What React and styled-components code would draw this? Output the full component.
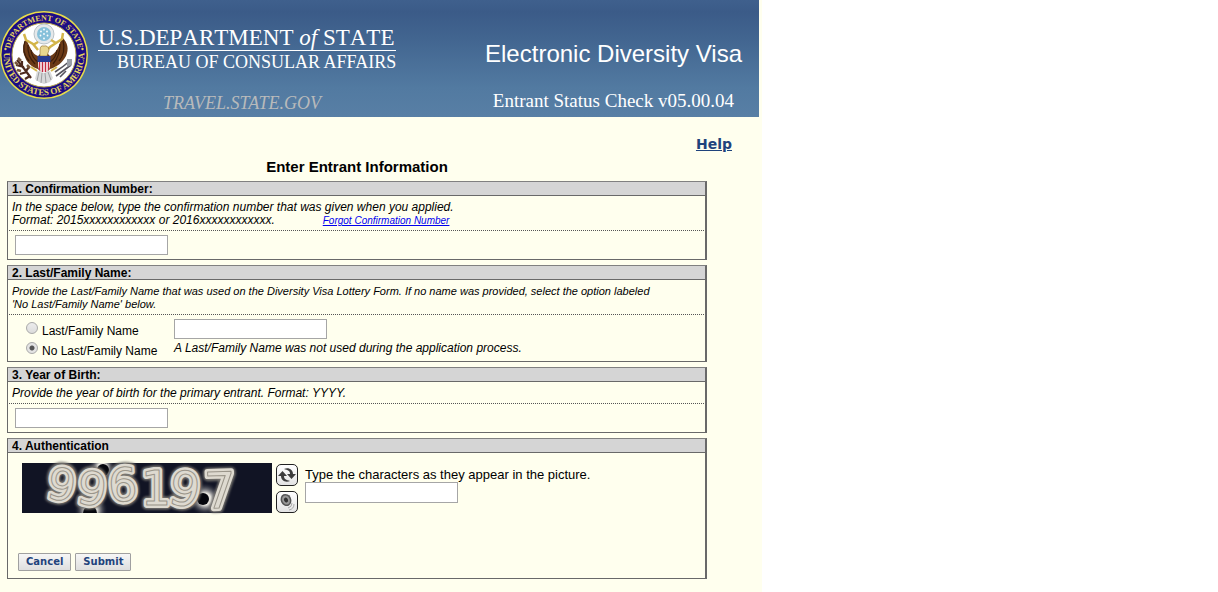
import React, { useState } from "react";
import styled, { createGlobalStyle } from "styled-components";

const GlobalStyle = createGlobalStyle`
  * { box-sizing: border-box; }
  body {
    margin: 0;
    background: #ffffff;
    color: #000000;
    font-family: "Liberation Sans", Arial, sans-serif;
  }
`;

const Page = styled.div`
  max-width: 762px;
  min-height: 100vh;
  padding-bottom: 13px;
  background: #ffffee;
`;

const Banner = styled.header`
  display: flex;
  align-items: flex-start;
  height: 117px;
  margin-right: 3px;
  padding-right: 17px;
  background: linear-gradient(#3f608d 0, #3b5b88 12px, #41648f 36px, #527aa1 88px, #587fa5 117px);
  color: #ffffff;
`;

const SealArt = styled.svg`
  flex: none;
  width: 89px;
  height: 90px;
  margin-top: 10px;
`;

const Agency = styled.div`
  display: flex;
  flex-direction: column;
  flex: none;
  margin: 26px 0 0 9px;
  font-family: "Liberation Serif", "Times New Roman", serif;
  white-space: nowrap;
`;

const Department = styled.div`
  border-bottom: 1px solid #ffffff;
  font-size: 23px;
  font-kerning: none;
  line-height: 24px;
`;

const Bureau = styled.div`
  margin-left: 19px;
  font-size: 18px;
  line-height: 22px;
`;

const SiteName = styled.div`
  margin: 20px 0 0 65px;
  color: #b8babb;
  font-size: 18px;
  font-style: italic;
  line-height: 20px;
`;

const Program = styled.div`
  flex: 1;
  padding-top: 40px;
  text-align: right;
  white-space: nowrap;
`;

const ProgramName = styled.div`
  font-size: 24px;
  line-height: 28px;
`;

const Version = styled.div`
  margin-top: 22px;
  padding-right: 8px;
  font-family: "Liberation Serif", "Times New Roman", serif;
  font-size: 19px;
  line-height: 22px;
`;

const HelpRow = styled.nav`
  padding: 18px 30px 0 0;
  font-family: "DejaVu Sans", Verdana, sans-serif;
  font-size: 14px;
  font-weight: bold;
  line-height: 18px;
  text-align: right;
`;

const HelpLink = styled.a`
  color: #1f437c;
`;

const EntrantForm = styled.form`
  display: flex;
  flex-direction: column;
  gap: 5px;
  padding: 0 55px 0 7px;
`;

const Heading = styled.h1`
  margin: 5px 0 0;
  font-size: 15px;
  line-height: 18px;
  text-align: center;
`;

const Panel = styled.section`
  border: 1px solid #696969;
  border-top-color: #808080;
  border-right-width: 2px;
`;

const PanelTitle = styled.h2`
  margin: 0;
  padding: 1px 0 0 4px;
  border-bottom: 1px solid #696969;
  background: #d5d5d5;
  font-size: 12px;
  line-height: 12px;
`;

const Instructions = styled.div`
  margin: 0 1px;
  padding: 5px 3px 3px;
  border-bottom: 1px dotted #555555;
  font-size: ${(p) => (p.$compact ? 11 : 12)}px;
  font-style: italic;
  line-height: 13px;
`;

const ForgotLink = styled.a`
  margin-left: 48px;
  color: #0000ee;
  font-size: 10px;
  line-height: 12px;
`;

const PanelBody = styled.div`
  padding: 4px 7px;
`;

const TextBox = styled.input`
  display: block;
  width: 153px;
  height: ${(p) => (p.$tall ? 21 : 20)}px;
  padding: 1px 3px;
  border: 1px solid #a6a6a6;
  border-radius: 0;
  background: #ffffff;
  font: 13px "Liberation Sans", Arial, sans-serif;
`;

const NameGrid = styled.div`
  display: grid;
  grid-template-columns: 148px 1fr;
  grid-template-rows: 20px 18px;
  align-items: start;
  padding: 4px 0 4px 18px;
  font-size: 12px;
`;

const Choice = styled.label`
  display: flex;
  align-items: flex-start;
  gap: 4px;
  padding-top: 3px;
`;

const ChoiceText = styled.span`
  padding-top: 3px;
  line-height: 12px;
  white-space: nowrap;
`;

const Radio = styled.input`
  appearance: none;
  flex: none;
  width: 12px;
  height: 12px;
  margin: 0;
  border: 1px solid #a9a9a9;
  border-radius: 50%;
  background: linear-gradient(#ececec, #dcdcdc);

  &:checked {
    background: radial-gradient(circle, #555555 0 2px, #e4e4e4 3px);
  }
`;

const NoteText = styled.div`
  font-style: italic;
  line-height: 18px;
`;

const AuthBody = styled.div`
  padding: 10px 10px 7px;
`;

const AuthRow = styled.div`
  display: flex;
  align-items: flex-start;
  padding-left: 4px;
`;

const CaptchaArt = styled.svg`
  flex: none;
  width: 250px;
  height: 50px;
  overflow: visible;
`;

const IconColumn = styled.div`
  display: flex;
  flex-direction: column;
  gap: 5px;
  margin: 1px 7px 0 4px;
`;

const IconButton = styled.button`
  display: block;
  width: 22px;
  height: 22px;
  padding: 0;
  border: 1px solid #222222;
  border-radius: 5px;
  background: linear-gradient(#ffffff, #e3e3e3);

  svg { display: block; width: 20px; height: 20px; }
`;

const AuthField = styled.label`
  padding-top: 4px;
  font-size: 13px;
  line-height: 15px;
`;

const Actions = styled.div`
  display: flex;
  gap: 4px;
  margin-top: 40px;
`;

const ActionButton = styled.button`
  height: 18px;
  padding: 0 7px;
  border: 1px solid #a0a0a0;
  border-radius: 1px;
  background: linear-gradient(#f6f6f6, #dedede);
  color: #1f437c;
  font: bold 10px/16px "DejaVu Sans", Verdana, sans-serif;
`;

const Seal = () => (
  <SealArt viewBox="0 0 89 90" role="img" aria-label="Department of State seal">
    <defs>
      <path id="arc-top" d="M9.500 45A34.500 34.500 0 0 1 78.500 45" />
      <path id="arc-bottom" d="M4 40A40.300 40.300 0 1 0 84 40" />
    </defs>
    <circle cx="44" cy="45" r="44" fill="#e8dc4a" />
    <circle cx="44" cy="45" r="42.500" fill="#1c0d85" />
    <circle cx="44" cy="45" r="32" fill="#ffffff" stroke="#b7a64c" strokeWidth="1" />
    <g fill="#e4d45e" fontFamily="Liberation Serif, serif" fontWeight="bold" textAnchor="middle">
      <text fontSize="8"><textPath href="#arc-top" startOffset="50%">DEPARTMENT OF STATE</textPath></text>
      <text fontSize="9"><textPath href="#arc-bottom" startOffset="50%">UNITED STATES OF AMERICA</textPath></text>
    </g>
    <circle cx="5.500" cy="39" r="1.200" fill="#e4d45e" />
    <circle cx="82.500" cy="39" r="1.200" fill="#e4d45e" />
    <circle cx="44" cy="24" r="10" fill="#e5e8ea" stroke="#a9b5bb" strokeWidth=".8" />
    <circle cx="44" cy="24" r="7" fill="#86c0da" />
    <g fill="#ffffff">
      <circle cx="44" cy="19.500" r=".9" /><circle cx="41" cy="21.500" r=".9" /><circle cx="47" cy="21.500" r=".9" />
      <circle cx="44" cy="24" r=".9" /><circle cx="40.500" cy="25.500" r=".9" /><circle cx="47.500" cy="25.500" r=".9" /><circle cx="44" cy="28.500" r=".9" />
    </g>
    <path d="M38 46 C32 44 30 37 26 29 C23 34 22 41 25 47 C27 53 32 57 38 59 L44 65 L50 59 C57 57 62 53 66 46 C69 39 68 33 62 27 C59 36 57 43 50 46 L44 40Z" fill="#6b3a17" />
    <path d="M25 31 Q21 42 29 51 M28 35 Q27 46 35 54 M31 40 Q32 48 38 52 M63 30 Q66 43 59 51 M60 34 Q60 46 53 54 M57 40 Q56 48 50 52" fill="none" stroke="#3b1d0b" strokeWidth="1.200" />
    <path d="M24 24 L26 30 L33 34 L38 40 M33 35 L38 32 M63 23 L62 29 L56 33 L50 37 L47 40 M56 33 L51 30" fill="none" stroke="#d3b54a" strokeWidth="2.500" />
    <path d="M40 40 Q40 35 44 36 Q48 35 49 40 L47 46 H40Z" fill="#ead78f" stroke="#8b6b32" strokeWidth=".6" />
    <path d="M37 61 L35 69 L39 72 L44 74 L50 72 L53 68 L50 61Z" fill="#d9dadb" />
    <path d="M39 62 L37 71 M42 63 L41 73 M45 63 L46 73 M48 62 L51 70" stroke="#8c8e91" strokeWidth=".8" />
    <path d="M38 47 H50 V56 Q50 60 44 63 Q38 60 38 56Z" fill="#ffffff" />
    <path d="M39.500 51V60 M42.500 51V62 M45.500 51V62 M48.500 51V60" stroke="#c32b40" strokeWidth="1.500" />
    <path d="M37.500 46 H50.500 V52 H37.500Z" fill="#283c93" />
    <path d="M17 50 Q24 58 31 68 M16 55 L24 57 M20 64 L27 62 M22 51 L22 57 M29 57 L26 61 M25 69 L30 66" fill="none" stroke="#4d291d" strokeWidth="2.200" />
    <path d="M18 48 l3 3 M15 52 l3 3 M17 60 l4 1 M27 55 l3 3" stroke="#79573c" strokeWidth="2.500" />
    <path d="M55 62 Q63 57 71 50 M56 66 L71 55 M60 67 L66 61" fill="none" stroke="#55535c" strokeWidth="1.600" />
    <path d="M67 49 L72 49 L72 55 L67 57Z" fill="#9ba0a8" />
    <path d="M31 57 L37 61 M57 57 L51 61" stroke="#d3b54a" strokeWidth="2" />
  </SealArt>
);

const DIGITS = [
  ["9", 39, 37, 44, 10],
  ["9", 70, 42, 46, 8],
  ["6", 101, 38, 46, -3],
  ["1", 134, 42, 48, 0],
  ["9", 163, 43, 48, 10],
  ["7", 198, 45, 50, -2],
];

const digitLayer = (props) =>
  DIGITS.map(([ch, cx, base, size, turn], i) => (
    <text
      key={i}
      x={cx}
      y={base}
      fontSize={size}
      textAnchor="middle"
      transform={`rotate(${turn} ${cx} 25)`}
      {...props}
    >
      {ch}
    </text>
  ));

const Captcha = () => (
  <CaptchaArt viewBox="0 0 250 50" role="img" aria-label="Verification characters">
    <defs>
      <filter id="soft" x="-20%" y="-20%" width="140%" height="140%">
        <feGaussianBlur stdDeviation="1" />
      </filter>
      <clipPath id="frame"><rect width="250" height="50" /></clipPath>
      <radialGradient id="glow">
        <stop offset="35%" stopColor="#e8e6df" />
        <stop offset="100%" stopColor="#111424" stopOpacity="0" />
      </radialGradient>
    </defs>
    <rect width="250" height="50" fill="#111424" />
    <g clipPath="url(#frame)">
      <circle cx="69" cy="47" r="17" fill="url(#glow)" />
      <circle cx="80" cy="5" r="14" fill="url(#glow)" />
      <circle cx="183" cy="36" r="17" fill="url(#glow)" />
      <circle cx="68" cy="50" r="7" fill="#05060c" />
      <circle cx="81" cy="7" r="6" fill="#05060c" />
      <circle cx="181" cy="36" r="6" fill="#05060c" />
    </g>
    <g fontFamily="DejaVu Sans, sans-serif" strokeLinejoin="round">
      {digitLayer({ fill: "#77756f", stroke: "#77756f", strokeWidth: 9, filter: "url(#soft)" })}
      {digitLayer({ fill: "none", stroke: "#dedad0", strokeWidth: 6 })}
      {digitLayer({ fill: "#dedad0", stroke: "#9a958a", strokeWidth: 1 })}
    </g>
  </CaptchaArt>
);

const RefreshIcon = () => (
  <svg viewBox="0 0 20 20" aria-hidden="true">
    <path d="M7 4 C12 2 16 5 16 9 H19 L14.500 14 L10 9 H13 C13 6 11 5 7 4Z" fill="#3d3d3d" />
    <path d="M13 16 C8 18 4 15 4 11 H1 L5.500 6 L10 11 H7 C7 14 9 15 13 16Z" fill="#3d3d3d" />
  </svg>
);

const SpeakerIcon = () => (
  <svg viewBox="0 0 20 20" aria-hidden="true">
    <path d="M4 5 Q7 2 13 3 L14 11 L9 14 Q4 12 4 5Z" fill="#aaaaaa" />
    <ellipse cx="9" cy="8" rx="4.500" ry="5.500" transform="rotate(-25 9 8)" fill="#999999" stroke="#555555" strokeWidth="1.500" />
    <ellipse cx="9" cy="8" rx="2" ry="2.500" transform="rotate(-25 9 8)" fill="#333333" />
    <path d="M11 16 Q15 15 15 11 M12 18 Q17 17 17 12" fill="none" stroke="#aaaaaa" strokeWidth="1" />
  </svg>
);

export default function App() {
  const [nameMode, setNameMode] = useState("none");

  return (
    <Page>
      <GlobalStyle />
      <Banner>
        <Seal />
        <Agency>
          <Department>U.S.DEPARTMENT <i>of</i> STATE</Department>
          <Bureau>BUREAU OF CONSULAR AFFAIRS</Bureau>
          <SiteName>TRAVEL.STATE.GOV</SiteName>
        </Agency>
        <Program>
          <ProgramName>Electronic Diversity Visa</ProgramName>
          <Version>Entrant Status Check v05.00.04</Version>
        </Program>
      </Banner>
      <HelpRow>
        <HelpLink href="#help">Help</HelpLink>
      </HelpRow>
      <EntrantForm onSubmit={(e) => e.preventDefault()}>
        <Heading>Enter Entrant Information</Heading>

        <Panel>
          <PanelTitle id="confirmation-title">1. Confirmation Number:</PanelTitle>
          <Instructions>
            In the space below, type the confirmation number that was given when you applied.
            <br />
            Format: 2015xxxxxxxxxxxx or 2016xxxxxxxxxxxx.
            <ForgotLink href="#forgot">Forgot Confirmation Number</ForgotLink>
          </Instructions>
          <PanelBody>
            <TextBox type="text" aria-labelledby="confirmation-title" />
          </PanelBody>
        </Panel>

        <Panel>
          <PanelTitle id="name-title">2. Last/Family Name:</PanelTitle>
          <Instructions $compact>
            Provide the Last/Family Name that was used on the Diversity Visa Lottery Form. If no name was provided, select the option labeled
            <br />
            'No Last/Family Name' below.
          </Instructions>
          <NameGrid>
            <Choice>
              <Radio type="radio" name="nameMode" checked={nameMode === "given"} onChange={() => setNameMode("given")} />
              <ChoiceText>Last/Family Name</ChoiceText>
            </Choice>
            <TextBox type="text" aria-labelledby="name-title" />
            <Choice>
              <Radio type="radio" name="nameMode" checked={nameMode === "none"} onChange={() => setNameMode("none")} />
              <ChoiceText>No Last/Family Name</ChoiceText>
            </Choice>
            <NoteText>A Last/Family Name was not used during the application process.</NoteText>
          </NameGrid>
        </Panel>

        <Panel>
          <PanelTitle id="birth-title">3. Year of Birth:</PanelTitle>
          <Instructions>Provide the year of birth for the primary entrant. Format: YYYY.</Instructions>
          <PanelBody>
            <TextBox type="text" aria-labelledby="birth-title" />
          </PanelBody>
        </Panel>

        <Panel>
          <PanelTitle>4. Authentication</PanelTitle>
          <AuthBody>
            <AuthRow>
              <Captcha />
              <IconColumn>
                <IconButton type="button" aria-label="New picture"><RefreshIcon /></IconButton>
                <IconButton type="button" aria-label="Play audio"><SpeakerIcon /></IconButton>
              </IconColumn>
              <AuthField>
                Type the characters as they appear in the picture.
                <TextBox type="text" $tall />
              </AuthField>
            </AuthRow>
            <Actions>
              <ActionButton type="button">Cancel</ActionButton>
              <ActionButton type="submit">Submit</ActionButton>
            </Actions>
          </AuthBody>
        </Panel>
      </EntrantForm>
    </Page>
  );
}
